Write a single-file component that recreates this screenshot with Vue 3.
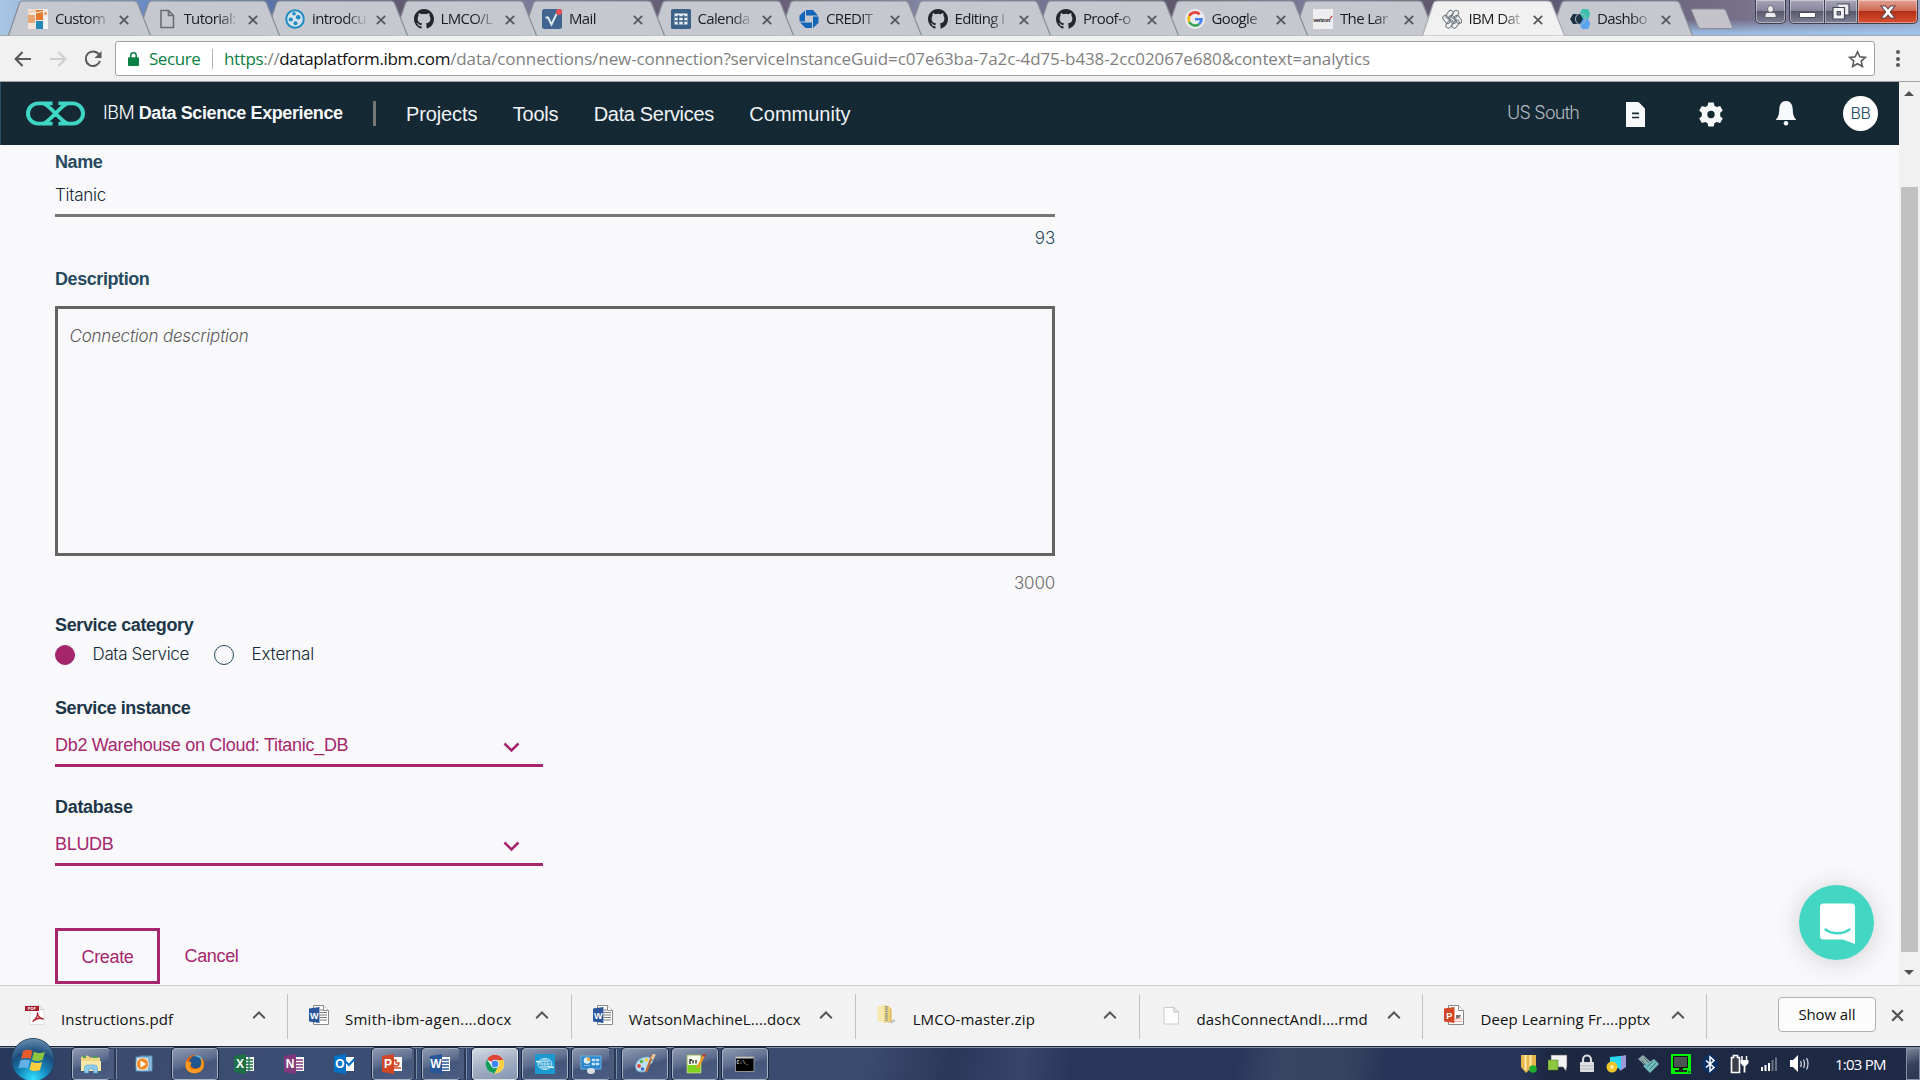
<script setup>
const tabs = [
  { icon: 'custom', title: 'Custom' },
  { icon: 'page', title: 'Tutorial:' },
  { icon: 'dots', title: 'introdcu' },
  { icon: 'github', title: 'LMCO/L' },
  { icon: 'mail', title: 'Mail' },
  { icon: 'calendar', title: 'Calenda' },
  { icon: 'chase', title: 'CREDIT' },
  { icon: 'github', title: 'Editing I' },
  { icon: 'github', title: 'Proof-o' },
  { icon: 'google', title: 'Google' },
  { icon: 'verizon', title: 'The Lar' },
  { icon: 'ibm', title: 'IBM Dat', active: true },
  { icon: 'dash', title: 'Dashbo' },
]
const nav = ['Projects', 'Tools', 'Data Services', 'Community']
const downloads = [
  { icon: 'pdf', name: 'Instructions.pdf' },
  { icon: 'word', name: 'Smith-ibm-agen....docx', loose: true },
  { icon: 'word', name: 'WatsonMachineL....docx' },
  { icon: 'zip', name: 'LMCO-master.zip' },
  { icon: 'file', name: 'dashConnectAndI....rmd' },
  { icon: 'ppt', name: 'Deep Learning Fr....pptx' },
]
const apps = [
  { icon: 'explorer', open: true, stack: true },
  { icon: 'media' },
  { icon: 'firefox', open: true },
  { icon: 'excel' },
  { icon: 'onenote' },
  { icon: 'outlook' },
  { icon: 'powerpoint', open: true, stack: true, slim: true },
  { icon: 'winword', open: true, stack: true },
  { icon: 'chrome', open: true, bright: true },
  { icon: 'globe', open: true },
  { icon: 'panel', open: true, stack: true },
  { icon: 'paint', open: true },
  { icon: 'notepad', open: true },
  { icon: 'cmd', open: true },
]
const office = {
  excel: { color: '#1e7145', letter: 'X' },
  onenote: { color: '#80397b', letter: 'N' },
  outlook: { color: '#0072c6', letter: 'O' },
  powerpoint: { color: '#d24726', letter: 'P' },
  winword: { color: '#2a579a', letter: 'W' },
}
</script>

<template>
  <div class="screen">
    <header class="strip">
      <div class="tabs">
        <div v-for="(t, i) in tabs" :key="i" class="tab" :class="{ active: t.active }" :style="{ zIndex: t.active ? 30 : 20 - i }">
          <svg class="tab-shape" width="144" height="36" viewBox="0 0 144 36">
            <path d="M.5 35.5 11.500 3Q12.400 1 15 1H126Q128.500 1 129.500 3L142.500 35.500" />
          </svg>
          <svg class="fav" width="20" height="20" viewBox="0 0 20 20">
            <g v-if="t.icon === 'custom'">
              <rect width="20" height="20" fill="#ece9e6" /><path d="M0 2l8-2v4L0 6z" fill="#f3d2b8" /><path d="M0 6h7v8H0z" fill="#e9a673" /><path d="M8 1h7v10H8z" fill="#e5792d" /><path d="M8 12h7v8H8z" fill="#2589b8" /><path d="M0 15h7v5H0z" fill="#f3e3d6" /><circle cx="17.500" cy="4.500" r="1.200" fill="#e5792d" /><path d="M16 7h4v13h-4z" fill="#f6f4f2" /><path d="M1 5 18 2" stroke="#f8efe8" />
            </g>
            <path v-else-if="t.icon === 'page'" d="M4 1.500h7.500l5 5v12H4zM11.500 1.500v5h5" fill="none" stroke="#6b6d70" stroke-width="1.600" />
            <g v-else-if="t.icon === 'dots'">
              <circle cx="10" cy="10" r="8.800" fill="#d5e3ed" stroke="#1d8cc4" stroke-width="2" /><circle cx="9" cy="4.800" r="1.800" fill="#1d8cc4" /><circle cx="5.800" cy="10.500" r="2.100" fill="#1d8cc4" /><circle cx="13.200" cy="8.300" r="2.300" fill="#1d8cc4" /><circle cx="10.500" cy="14.300" r="2" fill="#1d8cc4" />
            </g>
            <path v-else-if="t.icon === 'github'" fill="#24262b" transform="scale(1.250)" d="M8 0C3.580 0 0 3.580 0 8c0 3.540 2.290 6.530 5.470 7.590.4.070.55-.17.55-.38v-1.490c-2.230.48-2.690-.94-2.690-.94-.36-.91-.89-1.160-.89-1.160-.73-.5.05-.49.05-.49.8.06 1.230.83 1.230.83.71 1.220 1.870.87 2.330.66.070-.52.280-.87.500-1.070-1.780-.2-3.640-.89-3.640-3.950 0-.87.310-1.590.820-2.150-.08-.2-.36-1.020.08-2.120 0 0 .67-.21 2.200.82a7.600 7.600 0 0 1 4 0c1.530-1.040 2.200-.82 2.200-.82.44 1.100.16 1.920.08 2.120.51.56.82 1.270.82 2.150 0 3.070-1.870 3.750-3.650 3.950.29.25.54.73.54 1.480v2.200c0 .21.15.46.55.38A8 8 0 0 0 16 8c0-4.420-3.580-8-8-8z" />
            <g v-else-if="t.icon === 'mail'">
              <rect y="0" width="20" height="20" rx="2.500" fill="#3f6590" /><path d="M3.500 8.500h2.500l3.500 7L14.500 5" fill="none" stroke="#dfe9f2" stroke-width="2" /><circle cx="17" cy="3" r="3" fill="#ef4f55" />
            </g>
            <g v-else-if="t.icon === 'calendar'">
              <rect width="20" height="20" rx="1.500" fill="#3b6186" /><path d="M3.500 4.500h13v11h-13z" fill="#e6edf4" /><path d="M3.500 8h13M3.500 12h13M7.500 6v9.500M12.500 6v9.500" stroke="#3b6186" stroke-width="1.500" />
            </g>
            <path v-else-if="t.icon === 'chase'" fill="#1365b8" d="M7 1h7l5 5.500h-12zM19.500 7.500V14L14 19V7.500zM13 19H6.500L1 13.500h12zM.5 12.500V6.500L6 1.500v11z" />
            <g v-else-if="t.icon === 'google'">
              <circle cx="10" cy="10" r="10" fill="#ececf0" /><g fill="none" stroke-width="2.600"><path d="M14.700 5.300A6.600 6.600 0 0 0 4.200 7" stroke="#e54335" /><path d="M4.200 7a7 7 0 0 0 0 6" stroke="#f6b704" /><path d="M4.200 13a6.600 6.600 0 0 0 10.100 2" stroke="#34a353" /><path d="M14.300 15A6.400 6.400 0 0 0 16.500 10.200H10" stroke="#4280ef" /></g>
            </g>
            <g v-else-if="t.icon === 'verizon'">
              <rect width="20" height="20" fill="#eeeef0" /><text x=".3" y="12.500" class="vz" textLength="17">verizon</text><path d="M17 10l2-3" stroke="#e02b20" stroke-width="1.200" />
            </g>
            <g v-else-if="t.icon === 'ibm'" fill="none" stroke="#6d7880" stroke-width="1">
              <rect x="5" y="1" width="5" height="9" rx="2.500" transform="rotate(35 7.500 5.500)" /><rect x="10.500" y="1" width="5" height="9" rx="2.500" transform="rotate(35 13 5.500)" /><rect x="2" y="6" width="5" height="9" rx="2.500" transform="rotate(-35 4.500 10.500)" /><rect x="8" y="6" width="5" height="9" rx="2.500" transform="rotate(-35 10.500 10.500)" /><rect x="13.500" y="6" width="5" height="9" rx="2.500" transform="rotate(-35 16 10.500)" /><rect x="5" y="10.500" width="5" height="9" rx="2.500" transform="rotate(35 7.500 15)" /><rect x="11" y="10.500" width="5" height="9" rx="2.500" transform="rotate(35 13.500 15)" />
            </g>
            <g v-else>
              <path d="M12 0h6l2.500 5-2.500 5h-6L9.500 5z" fill="#3fc0ae" /><path d="M12 10h6l2.500 5-2.500 5h-6l-2.500-5z" fill="#5aa4ee" /><path d="M3 5h7l3 5-3 5H3l-3-5z" fill="#1b3145" /><ellipse cx="10.500" cy="10" rx="5" ry="5.500" fill="none" stroke="#a7b8c8" />
            </g>
          </svg>
          <span class="tab-title">{{ t.title }}</span>
          <svg class="tab-close" width="10" height="10" viewBox="0 0 10 10"><path d="M.8.8l8.400 8.400M9.200.8.8 9.200" /></svg>
        </div>
      </div>
      <svg class="newtab" width="44" height="22" viewBox="0 0 44 22"><path d="M1.500 2.500Q1 1 3 1H33q2 0 2.700 1.500L42.500 19q.5 1.500-1 1.500H10.500Q9 20.500 8.300 19z" /></svg>
      <div class="caption">
        <div class="cap user">
          <svg width="13" height="13" viewBox="0 0 13 13"><ellipse cx="6.500" cy="4" rx="3" ry="3.400" /><path d="M1 12.500V10q0-2 2.500-2.500h6Q12 8 12 10v2.500z" /></svg>
        </div>
        <div class="capgroup">
          <div class="cap min"><i></i></div>
          <div class="cap max">
            <svg width="18" height="17" viewBox="0 0 18 17"><path d="M5 1h12v11h-4" fill="#eee" stroke="#454858" stroke-width="1.200" /><path d="M1 4.500h11.500V16H1z" fill="#f5f5f8" stroke="#454858" stroke-width="1.200" /><path d="M5 8.500h3.500v3.500H5z" fill="#858494" stroke="#454858" /></svg>
          </div>
          <div class="cap shut">
            <svg width="16" height="14" viewBox="0 0 16 14"><path d="M1 1h4.500L8 4l2.500-3H15L10.300 7 15 13h-4.500L8 10l-2.500 3H1L5.700 7z" fill="#fff" stroke="#5f4550" stroke-width="1.100" /></svg>
          </div>
        </div>
      </div>
    </header>

    <div class="toolbar">
      <svg class="back" width="18" height="16" viewBox="0 0 18 16"><path d="M17 8H2M8.500 1 1.700 8l6.800 7" /></svg>
      <svg class="fwd" width="18" height="16" viewBox="0 0 18 16"><path d="M1 8h15M9.500 1l6.800 7-6.800 7" /></svg>
      <svg class="reload" width="18" height="18" viewBox="0 0 18 18"><path d="M14.800 4.200A7.300 7.300 0 1 0 16 11" fill="none" stroke="#5a5a5a" stroke-width="2" /><path d="M17.500 1v7h-7z" fill="#5a5a5a" /></svg>
      <div class="omni">
        <svg width="11" height="14" viewBox="0 0 11 14"><path d="M2.800 6V3.500a2.700 2.700 0 0 1 5.400 0V6" fill="none" stroke="#0b8043" stroke-width="1.500" /><rect y="5.300" width="11" height="8.700" rx="1" fill="#0b8043" /></svg>
        <span class="secure">Secure</span>
        <i class="bar"></i>
        <span class="url"><span class="scheme">https</span><span class="sep">://</span><span class="host">dataplatform.ibm.com</span>/data/connections/new-connection?serviceInstanceGuid=c07e63ba-7a2c-4d75-b438-2cc02067e680&amp;context=analytics</span>
        <svg class="star" width="19" height="18" viewBox="0 0 19 18"><path d="M9.500 1.800l2.300 5 5.500.6-4.100 3.700 1.200 5.400-4.900-2.800-4.900 2.800 1.200-5.400L1.700 7.400l5.500-.6z" fill="none" stroke="#5a5a5a" stroke-width="1.600" /></svg>
      </div>
      <div class="more"><i></i><i></i><i></i></div>
    </div>

    <div class="viewport">
      <div class="page">
        <div class="masthead">
          <svg class="logo" width="59" height="25" viewBox="0 0 60 26" preserveAspectRatio="none"><path d="M27 2.500H12.500a10.500 10.500 0 0 0 0 21h4C24 23.500 36 2.500 43.500 2.500h4a10.500 10.500 0 0 1 0 21H33M33 2.500h11M16 23.500h11M14 2.500h2.500C24 2.500 36 23.500 43.500 23.500H47" /></svg>
          <span class="brand"><span class="thin">IBM </span><b>Data Science Experience</b></span>
          <i class="divider"></i>
          <nav><a v-for="(n, i) in nav" :key="n" :class="'n' + i">{{ n }}</a></nav>
          <span class="region">US South</span>
          <svg class="doc" width="19" height="25" viewBox="0 0 19 25"><path d="M0 0h12.500L19 6.500V25H0z" fill="#f8f9fb" /><path d="M6 11.300h7M6 15.500h7" stroke="#152934" stroke-width="1.700" /></svg>
          <svg class="gear" width="26" height="26" viewBox="0 0 26 26"><path d="M10.300.5h5.400l.7 3.300 2.300 1.300 3.400-1.200 2.700 4.600-2.600 2.300v3.400l2.600 2.300-2.700 4.600-3.400-1.200-2.300 1.300-.7 3.300h-5.400l-.7-3.300-2.300-1.300-3.400 1.200-2.700-4.600 2.600-2.300v-3.400L1.200 8.500l2.700-4.600 3.400 1.200 2.300-1.300z" fill="#f8f9fb" /><circle cx="13" cy="12.500" r="3.700" fill="#152934" /></svg>
          <svg class="bell" width="20" height="25" viewBox="0 0 20 25"><path d="M10 0c4.300 0 6.500 3.500 6.700 8 .2 5 .8 8 3.300 10.500v.5H0v-.5C2.500 16 3.100 13 3.300 8 3.500 3.500 5.700 0 10 0z" fill="#f8f9fb" /><circle cx="10" cy="22.300" r="2.300" fill="#f8f9fb" /></svg>
          <span class="avatar">BB</span>
        </div>

        <form class="form" @submit.prevent>
          <label class="label blue">Name</label>
          <div class="input">Titanic</div>
          <div class="count c1">93</div>
          <label class="label blue l2">Description</label>
          <div class="area">Connection description</div>
          <div class="count c2">3000</div>
          <label class="label l3">Service category</label>
          <div class="radios">
            <i class="radio on"></i><span class="r1">Data Service</span>
            <i class="radio"></i><span class="r2">External</span>
          </div>
          <label class="label l4">Service instance</label>
          <div class="select"><span>Db2 Warehouse on Cloud: Titanic_DB</span><svg width="17" height="11" viewBox="0 0 17 11"><path d="M1.500 1.500l7 7 7-7" /></svg></div>
          <label class="label l5">Database</label>
          <div class="select"><span class="db">BLUDB</span><svg width="17" height="11" viewBox="0 0 17 11"><path d="M1.500 1.500l7 7 7-7" /></svg></div>
          <div class="actions"><button class="create">Create</button><a class="cancel">Cancel</a></div>
        </form>

        <div class="chat">
          <svg width="37" height="42" viewBox="0 0 37 42"><path d="M4.500.5h28q3.500 0 3.500 3.500v37L24 36.500H4.500Q1 36.500 1 33V4Q1 .5 4.500.5z" fill="#fff" /><path d="M6.500 26.500c7 5 17 5 24 0" fill="none" stroke="#43d6c3" stroke-width="2.400" stroke-linecap="round" /></svg>
        </div>
      </div>
      <div class="scroll">
        <i class="up"></i><i class="thumb"></i><i class="down"></i>
      </div>
    </div>

    <div class="shelf">
      <div v-for="d in downloads" :key="d.name" class="dl">
        <svg width="20" height="20" viewBox="0 0 20 20">
          <g v-if="d.icon === 'pdf'"><path d="M5 .5h10l4 4V19.500H5z" fill="#fff" stroke="#ddd" /><path d="M15 .5v4h4" fill="#eee" stroke="#c9c9c9" /><path d="M0 1h14v5H0z" fill="#a51d2d" /><text x="2.800" y="5.200" class="pdf">PDF</text><path d="M7.500 16.500C11 14 13 11 12.500 7.500 12 10 15 14 18.500 14 15 12.500 11 13.500 7.500 16.500z" fill="none" stroke="#b5202f" stroke-width="1.400" /></g>
          <g v-else-if="d.icon === 'word' || d.icon === 'ppt'">
            <path d="M4.500.5h10l5 5v14h-15z" fill="#fff" stroke="#8a8a8a" /><path d="M14.500.5v5h5" fill="#fff" stroke="#8a8a8a" />
            <path v-if="d.icon === 'word'" d="M11 5h3M11 7.500h7M11 10h7M11 12.500h7M11 15h7" stroke="#777" />
            <g v-else><path d="M12 5v5h5a5 5 0 0 1-5 4z" fill="#777" /><path d="M11 14h7M11 16.500h7" stroke="#e8a58e" /></g>
            <path d="M0 3.500 10.500 2v16L0 16.500z" :fill="d.icon === 'word' ? '#2b579a' : '#d24726'" />
            <text :x="d.icon === 'word' ? 1 : 2.200" y="13.500" class="offs">{{ d.icon === 'word' ? 'W' : 'P' }}</text>
          </g>
          <g v-else-if="d.icon === 'zip'"><path d="M11 18l6-4 1.500 2-3.500 2z" fill="#c4c4c4" /><path d="M.5 1.500 8 0v17l-7.500-1z" fill="#f7e9ae" /><path d="M7 0l6 1.500V17L7 18z" fill="#edd37c" /><path d="M13 3l1.500 1v12L13 17z" fill="#dfb94e" /><path d="M9.500 1v15" stroke="#7f8ea0" stroke-width="2" stroke-dasharray="1.500 .8" /></g>
          <g v-else><path d="M3 2.500h10.500l4 4V19H3z" fill="#fdfdfd" stroke="#ccc" /><path d="M13 2.500V7h4.500" fill="#eee" stroke="#bbb" /></g>
        </svg>
        <span :class="{ loose: d.loose }">{{ d.name }}</span>
        <svg class="chev" width="14" height="8" viewBox="0 0 14 8"><path d="M1.200 7.200 7 1.500l5.800 5.700" /></svg>
      </div>
      <button class="showall">Show all</button>
      <svg class="x" width="13" height="13" viewBox="0 0 13 13"><path d="M1.200 1.200l10.600 10.600M11.800 1.200 1.200 11.800" /></svg>
    </div>

    <div class="taskbar">
      <div class="orb">
        <svg width="30" height="28" viewBox="0 0 30 28"><path d="M5 5C8.500 3 12 3.500 14.500 5L12.500 13C9.500 11.500 6 11.500 3 13z" fill="#e8592b" /><path d="M16 5.500c3.500 2 7 2 11 .5l-2.500 8c-3.500 1.500-7 1.500-10.500-.5z" fill="#8fc43f" /><path d="M2.500 14.500c3-1.500 6.500-1.500 9.500 0l-2 8C7 21 3.500 21 .5 22.500z" fill="#64b1e6" /><path d="M13.500 15.500c3.500 2 7 2 10.500.5l-2 8c-3.500 1.500-7.500 1.500-10.500-.5z" fill="#fccd3f" /></svg>
      </div>
      <div class="apps">
        <div v-for="a in apps" :key="a.icon" class="slot">
          <div class="app" :class="{ open: a.open, stack: a.stack, slim: a.slim, bright: a.bright }">
            <svg width="22" height="20" viewBox="0 0 22 20">
              <g v-if="office[a.icon]">
                <path d="M10 3h10v14H10z" fill="#fff" /><g :stroke="office[a.icon].color" stroke-width="1.300" fill="none">
                  <path v-if="a.icon === 'outlook'" d="M10 6l5 5 5.500-6" stroke-width="2" /><path v-else-if="a.icon === 'powerpoint'" d="M14 6a3 3 0 1 0 3 3h-3zM12 14h7" /><path v-else d="M11 6h8M11 9h8M11 12h8M11 15h8" /><path v-if="a.icon === 'excel'" d="M15 3v14" />
                </g>
                <path d="M0 2 12 0v20L0 18z" :fill="office[a.icon].color" />
                <text x="6" y="14" text-anchor="middle" class="office">{{ office[a.icon].letter }}</text>
              </g>
              <g v-else-if="a.icon === 'explorer'"><path d="M1 3l7-1.500 2 2h10V17H1z" fill="#f0d581" /><path d="M3 2h3v2H3zM13 2h4v2h-4z" fill="#4b9d5d" /><path d="M1 7h20v10H1z" fill="#f8e7a8" /><path d="M4.500 19v-5q0-3 3-3h7q3 0 3 3v5h-4v-4h-5v4z" fill="#8fcdf0" stroke="#4f9fd2" stroke-width=".6" /></g>
              <g v-else-if="a.icon === 'media'"><path d="M6 2h12v15H6z" fill="#8fc3e0" stroke="#5b8fb8" /><path d="M2 3h13v14H2z" fill="#bfe0ef" stroke="#5b8fb8" /><circle cx="8.500" cy="10" r="6" fill="#f08a24" stroke="#fff" stroke-width=".6" /><path d="M6.500 6.500v7l5.500-3.500z" fill="#fff" /></g>
              <g v-else-if="a.icon === 'firefox'"><circle cx="11" cy="10" r="9.300" fill="#e66000" /><circle cx="12" cy="8" r="6.500" fill="#21558f" /><path d="M2 6c1 2 3 2 5 2 1 3-2 3-1 5 2 3 7 3 10 0 1.500-2 2-6-.5-10 5 3 5.500 10 2 13.500-5 5-15 3-16-4z" fill="#ff9b1f" /><path d="M10 2c4-2 8 1 9 4-2-2-5-3-9-4z" fill="#5ab7e8" /></g>
              <g v-else-if="a.icon === 'chrome'"><circle cx="11" cy="10" r="9.200" fill="#fff" /><path d="M11 10 3 5.400A9.200 9.200 0 0 1 19.200 6H11z" fill="#db4437" /><path d="M11 6h8.300A9.200 9.200 0 0 1 10.500 19.200L14.500 12z" fill="#ffcd40" /><path d="M3 5.400A9.200 9.200 0 0 0 10.500 19.200l4-7.200-3.500 2-3.500-2z" fill="#0f9d58" /><circle cx="11" cy="10" r="4.300" fill="#fff" /><circle cx="11" cy="10" r="3.400" fill="#4285f4" /></g>
              <g v-else-if="a.icon === 'globe'"><rect x="1" width="20" height="20" fill="#1c9ad0" /><g stroke="#b9e2f2" fill="none" stroke-width="1"><ellipse cx="11" cy="10" rx="7" ry="5.500" /><ellipse cx="11" cy="10" rx="3" ry="5.500" /><path d="M11 4.500v11M4 10h14M5.500 7.200h11M5.500 12.800h11" /></g><path d="M2 7.500l5 .5M14 12.500l6 1" stroke="#d8f0f8" stroke-width="1.500" /></g>
              <g v-else-if="a.icon === 'panel'"><rect x="1" y="2" width="20" height="13" fill="#2c83c8" stroke="#62b5e6" /><circle cx="7" cy="6.500" r="3.300" fill="#d8ecf8" /><path d="M7 6.500V3.200A3.300 3.300 0 0 1 10 7z" fill="#f0a83a" /><path d="M12 5h3v2h-3zM16 5h3v2h-3zM12 9h3v2h-3zM16 9h3v2h-3zM4 11.500h6" fill="#bfe2f6" stroke="#bfe2f6" stroke-width=".6" /><ellipse cx="11" cy="17" rx="4" ry="3" fill="#dcdfe3" /></g>
              <g v-else-if="a.icon === 'paint'"><path d="M2 15C0 8 6 3 13 3c5 0 7 3 5 6-1 1.500-3 1-3.500 3-.5 3-2 6-6 6-3.500 0-6-1-6.500-3z" fill="#bfe0f3" stroke="#6fa8cc" /><circle cx="5" cy="12" r="1.900" fill="#e5483b" /><circle cx="7.500" cy="7.500" r="1.800" fill="#57b547" /><circle cx="12.500" cy="6" r="1.800" fill="#f4cf3a" /><circle cx="8.500" cy="15" r="1.800" fill="#3d6fd0" /><path d="M18.500 1 12 18" stroke="#b86b35" stroke-width="2.200" /><path d="M20.500 0 18 5" stroke="#e5c79a" stroke-width="3" /></g>
              <g v-else-if="a.icon === 'notepad'"><path d="M3 1h14v18H3z" fill="#f5fbe9" stroke="#9ab06a" /><path d="M3.500 11h13v7.500h-13z" fill="#7ed321" /><path d="M6 5v5M9 6v3.500M12 6v3.500M6 6h2" stroke="#222" stroke-width="1.300" /><path d="M20 1 13.500 14" stroke="#f09a1d" stroke-width="2.400" /><path d="M20.800 0 19.500 2.500" stroke="#c0392b" stroke-width="2.600" /></g>
              <g v-else><rect x="1.500" y="2.500" width="18.500" height="15" fill="#000" stroke="#8b8f96" /><path d="M2 3h17.500v1.500H2z" fill="#c7c9cc" /><text x="2.600" y="9.500" class="cmd">C:\_</text></g>
            </svg>
          </div>
        </div>
      </div>
      <div class="tray">
        <svg width="16" height="20" viewBox="0 0 16 20"><path d="M0 1h15v13l-4 4-3-2-3 3-5-6z" fill="#e6b84c" /><path d="M4.500 1v15M9.500 1v15" stroke="#fbe7ac" stroke-width="2" /><circle cx="12" cy="15" r="3.800" fill="#1fae2a" /></svg>
        <svg width="20" height="20" viewBox="0 0 20 20"><path d="M3 1h16v11l-1 5-3-4H3z" fill="#f3f3f3" stroke="#555" stroke-width=".6" /><rect x="0" y="6" width="10" height="10" fill="#8dc63f" stroke="#5d7d2d" stroke-width=".6" /></svg>
        <svg width="16" height="20" viewBox="0 0 16 20"><path d="M4 10V5.500a4 4 0 0 1 8 0V10" fill="none" stroke="#d9dbdf" stroke-width="2.200" /><rect x="1" y="8" width="14" height="10" rx="1" fill="#dfe1e4" /><path d="M1 12h14M1 15h14" stroke="#b3b6bb" /></svg>
        <svg width="21" height="20" viewBox="0 0 21 20"><path d="M10 3l10-2v12l-6 4z" fill="#9a9ad8" /><path d="M4 3l11-1v13L4 12z" fill="#27d8f4" /><circle cx="6" cy="13" r="5.500" fill="#f0c62d" /><circle cx="6" cy="13" r="1.700" fill="#fff3bb" /></svg>
        <svg width="21" height="20" viewBox="0 0 21 20"><path d="M0 5l5-4 10 9-4 5z" fill="#8fa7a7" /><path d="M5 12 16 5l5 5-9 9z" fill="#6fb9bb" /><path d="M3 6l5 5M6 4l5 5M9 13l6-6M12 15l6-6" stroke="#47797e" /></svg>
        <svg width="20" height="20" viewBox="0 0 20 20"><path d="M0 0h20v20H0z" fill="#00f000" /><path d="M2.500 2.500h14v11h-14z" fill="#4b5450" stroke="#111" /><path d="M8 14h4v2H8zM4 16h12v2H4z" fill="#222" /><circle cx="18" cy="18" r="1" fill="#060" /></svg>
        <svg width="16" height="20" viewBox="0 0 16 20"><ellipse cx="8" cy="10" rx="7.500" ry="9.700" fill="#0a2f63" /><path d="M4 6.500l8 7L8 17V3l4 3.500-8 7" fill="none" stroke="#fff" stroke-width="1.500" /></svg>
        <svg width="20" height="20" viewBox="0 0 20 20"><path d="M2.500 3.500h2v-2h4v2h2v15h-8z" fill="#3b3f4b" stroke="#fff" stroke-width="1.600" /><path d="M13 2v4M17.500 2v4" stroke="#fff" stroke-width="1.500" /><path d="M11.500 6h8v3l-2.500 3h-3l-2.500-3z" fill="#fff" /><path d="M15.500 12v6.500" stroke="#fff" stroke-width="1.800" /></svg>
        <svg width="18" height="20" viewBox="0 0 18 20"><path d="M1 13h2v4H1zM4.500 11h2v6h-2zM8 9h2v8H8z" fill="#fff" /><path d="M11.500 6h2v11h-2zM15 3.500h2V17h-2z" fill="#6c7283" /></svg>
        <svg width="20" height="20" viewBox="0 0 20 20"><path d="M1 6h3l5-5v17l-5-5H1z" fill="#fff" /><path d="M11.500 7q1.500 3 0 6M14.500 5.500q2 4 0 8.500M17.500 4q3 5.500 0 11.500" fill="none" stroke="#cfd3dc" stroke-width="1.300" /></svg>
        <span class="clock">1:03 PM</span>
        <i class="peek"></i>
      </div>
    </div>
  </div>
</template>

<style>
body { margin: 0; overflow: hidden; }
</style>

<style scoped>
.screen { width: 1920px; height: 1080px; display: flex; flex-direction: column; overflow: hidden; background: #f8f9fb; font-family: "Liberation Sans", Arial, sans-serif; }
.screen * { box-sizing: border-box; }
svg { flex: none; display: block; }

.strip { height: 35px; flex: none; display: flex; position: relative; background: linear-gradient(180deg, transparent 20px, rgba(160, 200, 240, .85) 33px) 1680px 0 / 240px 35px no-repeat, linear-gradient(90deg, #a9c6e3 0, #6b8dc4 140px, #5b74a8 270px, #635a72 400px, #7c7b98 530px, #625a72 680px, #6a6178 800px, #8587a6 930px, #73708e 1060px, #5e5669 1180px, #7d7b98 1310px, #615970 1430px, #605a74 1560px, #77708a 1740px, #9aa6c8 1920px); }
.tabs { display: flex; padding-left: 8px; }
.tab { position: relative; width: 144px; height: 36px; margin-right: -15.500px; flex: none; display: flex; align-items: center; }
.tab-shape { position: absolute; left: 0; top: 0; }
.tab-shape path { fill: #c5c8cf; stroke: #888d97; stroke-width: 1.200; }
.tab.active .tab-shape path { fill: #f1f1f1; stroke: #a9abaf; }
.fav { position: relative; margin: 2px 0 0 20px; }
.tab-title { position: relative; width: 56px; margin: 0 0 0 7px; white-space: nowrap; font: 15px/24px "Open Sans", sans-serif; letter-spacing: -.65px; color: #1c1c20; -webkit-mask-image: linear-gradient(90deg, #000 34px, transparent 56px); mask-image: linear-gradient(90deg, #000 34px, transparent 56px); }
.tab-close { position: relative; margin: 3px 0 0 8px; }
.tab-close path { stroke: #55565a; stroke-width: 1.700; fill: none; }
.vz { font: bold 5.500px "Liberation Sans", sans-serif; fill: #222; }
.newtab { margin: 8px 0 0 11px; }
.newtab path { fill: #c3c2c8; stroke: #8b8c98; }
.caption { position: absolute; left: 1755px; top: 0; display: flex; gap: 3px; }
.cap { height: 24px; display: flex; align-items: center; justify-content: center; background: linear-gradient(#a6a4b5 0, #85839a 48%, #5a586c 50%, #7f8198 100%); border: 1px solid #3f4052; border-top: 0; box-shadow: inset 0 0 0 1px rgba(255, 255, 255, .4); }
.user { width: 31px; border-radius: 0 0 5px 5px; }
.user svg { fill: #eceaf0; stroke: #555; stroke-width: .8; }
.capgroup { display: flex; }
.min { width: 36px; border-radius: 0 0 0 5px; align-items: flex-end; padding-bottom: 5px; }
.min i { width: 17px; height: 6px; background: #fff; border: 1px solid #4b4c5d; border-radius: 1px; }
.max { width: 33px; border-left: 0; }
.shut { width: 60px; border-left: 0; border-radius: 0 0 5px 0; background: linear-gradient(#e2a295 0, #cf6a55 46%, #b32f17 50%, #d8502f 100%); }

.toolbar { height: 47px; flex: none; display: flex; align-items: center; background: #f1f1f1; border-top: 1px solid #a5a8ad; border-bottom: 1px solid #a0a2a5; }
.back, .fwd { fill: none; stroke: #5a5a5a; stroke-width: 2.200; margin-left: 14px; }
.fwd { stroke: #cfcfcf; margin-left: 17px; }
.reload { margin-left: 17px; }
.omni { margin-left: 13px; width: 1760px; height: 35px; display: flex; align-items: center; background: #fff; border: 1px solid #a3a3a3; border-radius: 3px; padding-left: 12px; font: 17px/24px "Open Sans", sans-serif; color: #7f7f7f; }
.secure { color: #0b8043; margin-left: 10px; width: 52px; letter-spacing: -.45px; }
.bar { width: 1px; height: 20px; background: #b5b5b5; margin: 0 11px 0 11px; }
.url { white-space: nowrap; letter-spacing: -.105px; }
.scheme { color: #0b8043; }
.scheme, .sep, .host { letter-spacing: -.34px; }
.host { color: #111; }
.star { margin-left: auto; margin-right: 7px; }
.more { display: flex; flex-direction: column; gap: 2.500px; margin-left: 21px; }
.more i { width: 4px; height: 4px; border-radius: 50%; background: #5a5a5a; }

.viewport { height: 903px; flex: none; display: flex; }
.page { width: 1899px; position: relative; background: #f9f9fb; }
.masthead { height: 63px; display: flex; align-items: center; background: #152934; color: #f8f9fb; border-left: 1px solid #2d4e68; white-space: nowrap; }
.logo { margin-left: 25px; fill: none; stroke: #3fd6c5; stroke-width: 4; }
.brand { margin-left: 18px; margin-bottom: 2px; width: 240px; font-size: 18px; line-height: 24px; letter-spacing: -.4px; }
.thin { font-family: Inter, sans-serif; font-weight: 300; letter-spacing: -.5px; }
.divider { width: 3px; height: 25px; margin-left: 30px; background: #777677; }
nav { display: flex; margin-left: 30px; width: 1101px; font-size: 20px; line-height: 24px; padding-top: 1px; color: #f0f3f5; }
nav a { margin-right: 35.500px; letter-spacing: -.12px; }
nav .n1 { letter-spacing: -.25px; }
nav .n2 { letter-spacing: -.34px; }
nav .n3 { letter-spacing: 0; }
.region { width: 84px; margin-bottom: 2px; font: 300 18px/24px Inter, sans-serif; letter-spacing: -.78px; color: #b0b8be; }
.doc { margin-left: 35px; margin-top: 2px; }
.gear { margin-left: 53px; margin-top: 2px; }
.bell { margin-left: 52px; }
.avatar { margin-left: 47px; width: 35px; height: 35px; border-radius: 50%; background: #fff; color: #264a60; font: 300 16px/35px Inter, sans-serif; text-align: center; letter-spacing: -.5px; }

.form { padding: 5px 0 0 55px; width: 1055px; display: flex; flex-direction: column; color: #152935; }
.label { font-weight: 700; font-size: 18px; line-height: 24px; letter-spacing: -.42px; color: #1d3649; }
.blue { color: #264a60; }
.input { margin-top: 9px; height: 34px; border-bottom: 3px solid #777677; font: 300 17px/24px Inter, sans-serif; letter-spacing: -.25px; }
.count { text-align: right; font: 300 17px/24px Inter, sans-serif; letter-spacing: -.2px; color: #264a60; }
.c1 { margin-top: 9px; }
.l2 { margin-top: 17px; }
.area { margin-top: 15px; height: 250px; border: 3px solid #646464; padding: 15px 11.500px; font: italic 300 17px/24px Inter, sans-serif; letter-spacing: -.2px; color: #5a5a5a; }
.c2 { margin-top: 15px; color: #6b6b6b; }
.l3 { margin-top: 18px; letter-spacing: -.36px; }
.radios { margin-top: 5px; height: 24px; display: flex; align-items: center; font: 300 17px/24px Inter, sans-serif; letter-spacing: -.35px; }
.radio { width: 20px; height: 20px; border: 1px solid #264a60; border-radius: 50%; margin: 2px 17.500px 0 0; }
.radio.on { background: #a6266e; border-color: #a6266e; }
.r1 { width: 121.500px; }
.r2 { letter-spacing: -.15px; }
.l4 { margin-top: 30px; }
.select { margin-top: 13px; width: 488px; height: 34px; border-bottom: 3px solid #a6266e; color: #a6266e; display: flex; justify-content: space-between; font-size: 18px; line-height: 24px; letter-spacing: -.3px; }
.select svg { margin: 9px 23px 0 0; fill: none; stroke: #a6266e; stroke-width: 2.600; }
.l5 { margin-top: 28px; letter-spacing: -.3px; }
.actions { margin-top: 62px; display: flex; height: 56px; font-size: 18px; letter-spacing: -.34px; color: #a6266e; }
.create { width: 105px; padding: 1px 0 0; background: none; border: 3px solid #a6266e; font: 18px/24px "Liberation Sans", sans-serif; letter-spacing: -.34px; color: #a6266e; }
.cancel { margin: 16px 0 0 24.500px; line-height: 24px; }

.chat { position: absolute; left: 1799px; top: 803px; width: 75px; height: 75px; border-radius: 50%; background: #43d6c3; display: flex; align-items: center; justify-content: center; padding-top: 3px; padding-left: 1px; box-shadow: 0 2px 26px rgba(0, 0, 0, .17); }
.scroll { width: 21px; background: #f1f1f1; display: flex; flex-direction: column; align-items: center; padding: 9px 1px 10px 0; }
.up { border: 5px solid transparent; border-bottom-color: #505050; border-top: 0; }
.thumb { width: 17px; height: 767px; margin-top: 91px; background: #c1c1c1; }
.down { border: 5px solid transparent; border-top-color: #505050; border-bottom: 0; margin-top: 18px; }

.shelf { height: 61px; flex: none; display: flex; background: #f2f2f2; border-top: 1px solid #d0d0d2; padding-left: 4px; }
.dl { width: 283.900px; height: 45px; margin-top: 8px; border-right: 1px solid #c1c1c3; display: flex; font: 15px/24px "Open Sans", sans-serif; letter-spacing: .12px; color: #111; white-space: nowrap; }
.dl svg:first-child { margin: 11px 16px 0 21px; }
.dl span { margin-top: 13px; width: 190.500px; }
.dl .loose { letter-spacing: .3px; }
.dl .chev { margin-top: 17px; fill: none; stroke: #555; stroke-width: 2; }
.pdf { font: bold 4px "Liberation Sans", sans-serif; fill: #fff; }
.offs { font: bold 9px "Liberation Sans", sans-serif; fill: #fff; }
.showall { margin: 11px 0 0 70.600px; width: 98px; height: 35px; padding: 0 0 1px; border: 1px solid #b0b0b2; border-radius: 4px; background: #fcfcfc; font: 15px/24px "Open Sans", sans-serif; letter-spacing: -.1px; color: #111; }
.x { margin: 23px 0 0 15px; stroke: #555; stroke-width: 2.300; }

.taskbar { height: 34px; flex: none; display: flex; position: relative; border-top: 1px solid #1e2736; box-shadow: inset 0 1px #8291ad; background: linear-gradient(100deg, #25365a 0, #3b4b6e 110px, #3a5078 500px, #3a4a6c 860px, #2a3759 940px, #37456a 1010px, #29365c 1060px, #29365a 1220px, #374564 1260px, #36435f 1330px, #283458 1370px, #27355a 1500px, #1c2740 1530px, #1f2b47 1920px); }
.orb { position: absolute; left: 11px; top: -9px; width: 44px; height: 44px; border-radius: 50%; border: 1px solid #244561; background: radial-gradient(circle at 50% 95%, #32e0ff 0, #168bc0 32%, #1b4c7b 60%, #5b84a8 85%, #b5cad9 100%); display: flex; align-items: center; justify-content: center; }
.apps { display: flex; padding-left: 72px; }
.slot { width: 50px; display: flex; }
.app { position: relative; width: 46px; height: 32px; margin-top: 1px; display: flex; align-items: center; justify-content: center; }
.open { border: 1px solid #a7b1c4; border-radius: 3px; outline: 1px solid #1d2840; background: linear-gradient(165deg, #8e9ab2 0, #5b6b8c 45%, #45567b 55%, #4b5d82 100%); }
.stack { width: 38px; }
.slim { width: 41px; }
.stack::after { content: ""; position: absolute; left: 100%; top: 0; width: 7px; height: 30px; border-right: 1px solid #7c8aa5; box-shadow: inset -3px 0 0 -1px #2b3957; background: #4b5b7d; }
.slim::after { width: 4px; }
.bright { background: linear-gradient(165deg, #d4dbe5 0, #a3afc3 50%, #8496b2 100%); border-color: #dde2ea; }
.office { font: bold 12px "Liberation Sans", sans-serif; fill: #fff; }
.cmd { font: bold 5px "Liberation Mono", monospace; fill: #ddd; }
.tray { margin-left: auto; display: flex; align-items: center; }
.tray svg { margin-right: 11.100px; }
.clock { margin-left: 15px; width: 52px; font: 15px/24px "Open Sans", sans-serif; letter-spacing: -.75px; color: #fff; white-space: nowrap; }
.peek { width: 14px; height: 32px; margin-left: 19px; border: 1px solid #8490a6; background: linear-gradient(160deg, #7c8799, #35415c 50%, #2b3751); }
</style>
